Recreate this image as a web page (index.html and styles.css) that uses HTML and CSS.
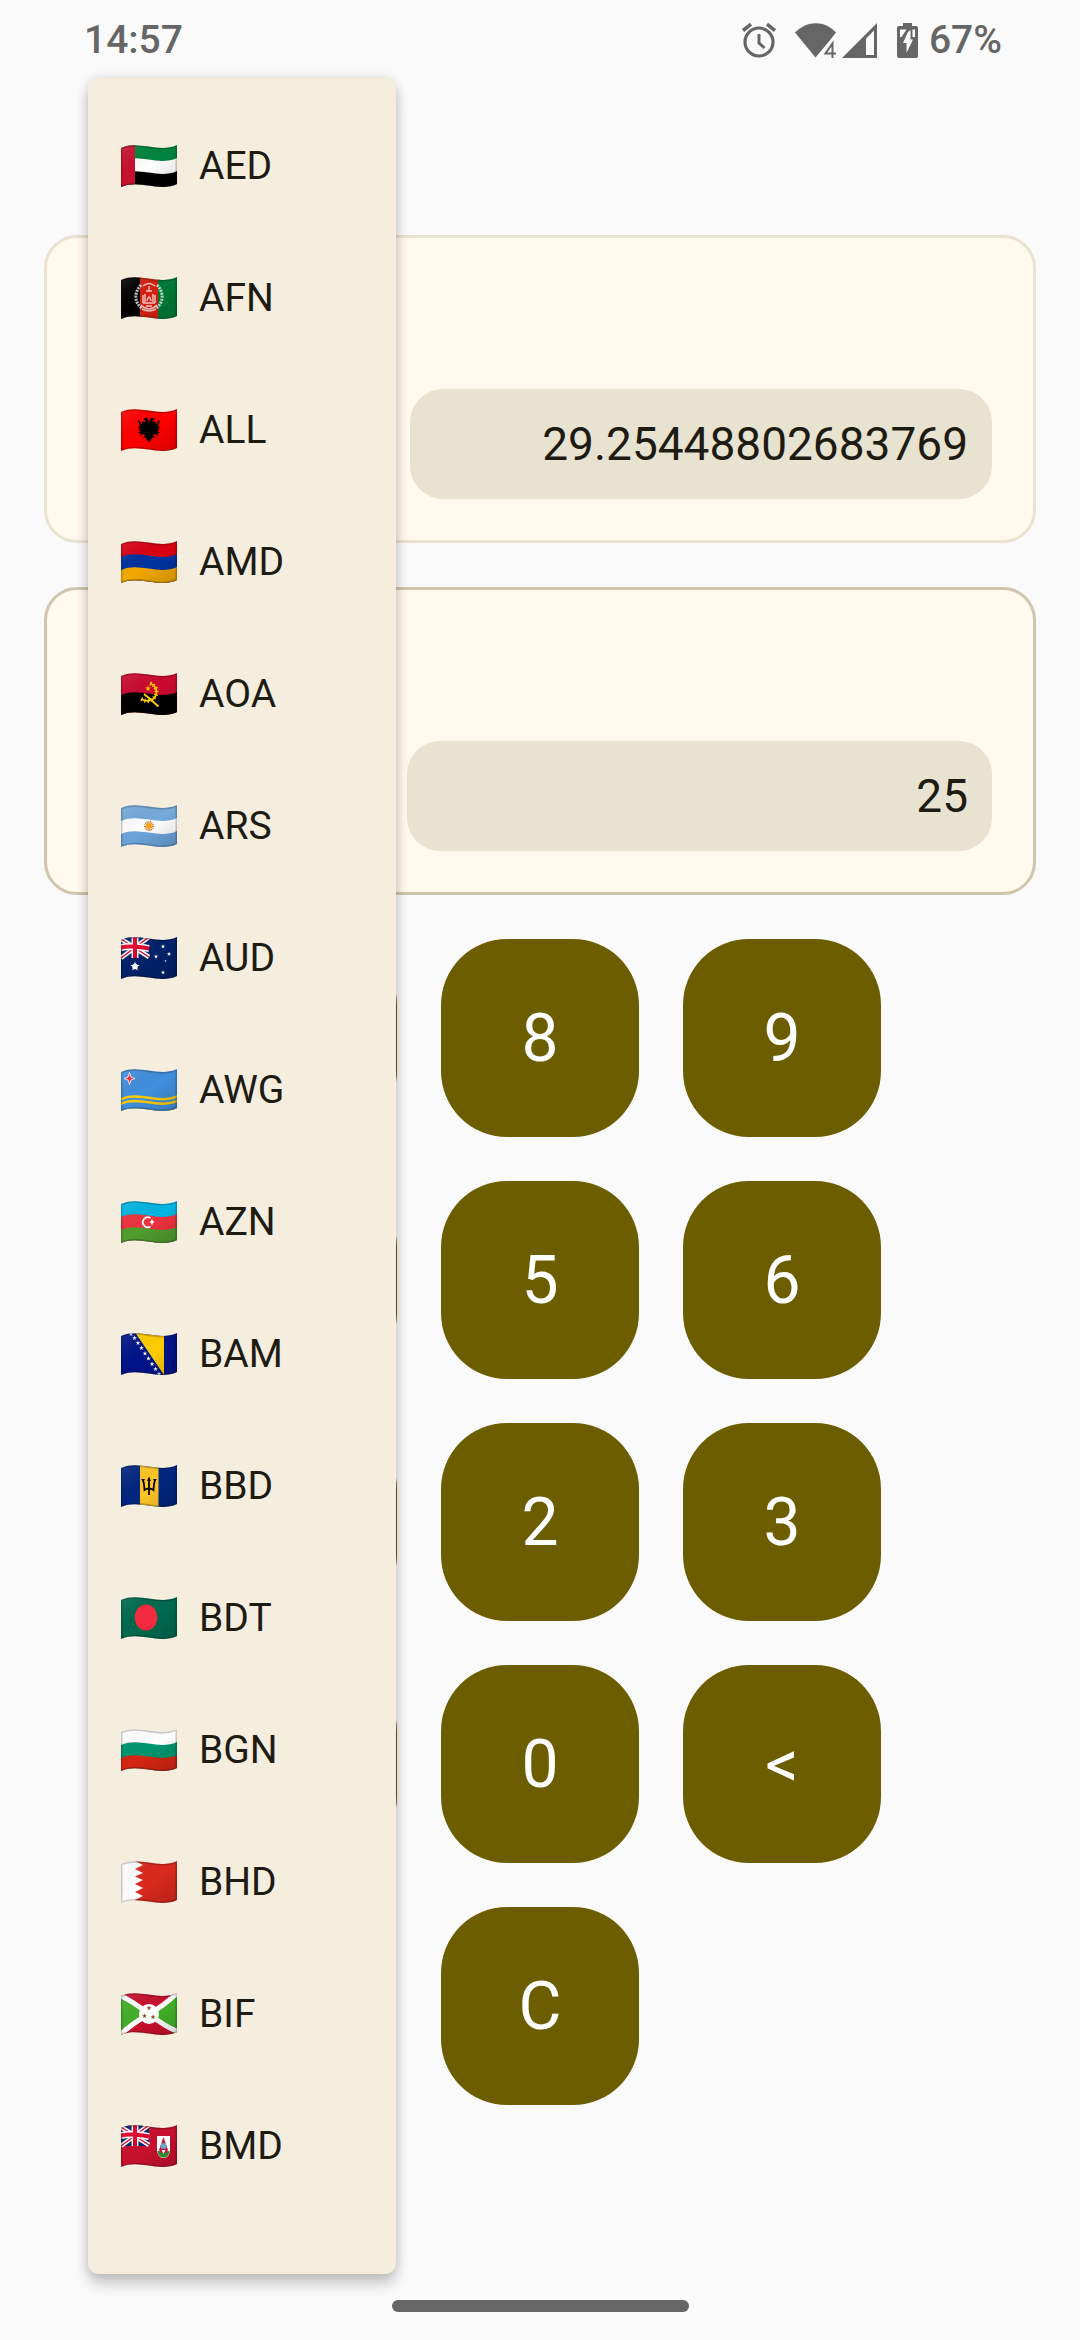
FILE: index.html
```html
<!DOCTYPE html>
<html lang="en">
<head>
<meta charset="utf-8">
<meta name="viewport" content="width=device-width, initial-scale=1">
<title>Currency converter</title>
<link rel="stylesheet" href="styles.css">
</head>
<body>
<svg class="sprite" width="0" height="0" aria-hidden="true">
  <defs>
    <clipPath id="cloth"><path d="M0 3C18-5 38 8.500 56 0V39C38 47.500 18 34 0 42Z"/></clipPath>
    <linearGradient id="light" x1="0" y1="0" x2="1" y2="1">
      <stop offset="0" stop-color="#fff" stop-opacity=".12"/>
      <stop offset=".5" stop-color="#000" stop-opacity="0"/>
      <stop offset="1" stop-color="#000" stop-opacity=".16"/>
    </linearGradient>
    <path id="band" d="M0 3C18-5 38 8.500 56 0V60H0Z"/>
    <g id="shade">
      <path d="M0 0H56V42H0Z" fill="url(#light)"/>
      <path d="M0 3C18-5 38 8.500 56 0V39C38 47.500 18 34 0 42Z" fill="none" stroke="#000" stroke-opacity=".2" stroke-width="3"/>
    </g>
    <path id="star" d="M0-5L1.200-1.600 4.800-1.500 1.900.6 2.900 4 0 2-2.900 4-1.900.6-4.800-1.500-1.200-1.600Z"/>
    <g id="jack">
      <path d="M0 0H28V21H0Z" fill="#012169"/>
      <path d="M0 2L28 20M28 0L0 21" stroke="#fff" stroke-width="4.500"/>
      <path d="M0 2L28 20M28 0L0 21" stroke="#e4002b" stroke-width="1.400"/>
      <path d="M14 0V21M0 10.500C10 8 18 10 28 11.500" stroke="#fff" stroke-width="7" fill="none"/>
      <path d="M14 0V21M0 10.500C10 8 18 10 28 11.500" stroke="#e4002b" stroke-width="4" fill="none"/>
    </g>
  </defs>
</svg>

<header class="status">
  <span class="clock">14:57</span>
  <div class="status-icons">
    <svg class="alarm" viewBox="0 0 34 35" aria-hidden="true" fill="none" stroke="#666">
      <circle cx="17" cy="19" r="14" stroke-width="3.200"/>
      <path d="M1 7.500L9 1.200M33 7.500L25 1.200" stroke-width="3.600"/>
      <path d="M17 11V20L22.500 25" stroke-width="3"/>
    </svg>
    <svg class="wifi" viewBox="0 0 42 35" aria-hidden="true">
      <path d="M0 9.500C12-3 30-3 41 9.500L33.500 19 20.500 34.500Z" fill="#666"/>
      <path d="M36 18.500L27.500 29V35H42V18.500Z" fill="#fafafa"/>
      <path d="M37.500 35V20.500L30.500 30.500H41" fill="none" stroke="#666" stroke-width="2"/>
    </svg>
    <svg class="signal" viewBox="0 0 35 35" aria-hidden="true">
      <path d="M0 35L35 0V35ZM24 32H32V7.500L24 15.500Z" fill="#666" fill-rule="evenodd"/>
    </svg>
    <svg class="battery" viewBox="0 0 21 36" aria-hidden="true">
      <path d="M6 4V1H15V4H19Q21 4 21 6V34Q21 36 19 36H2Q0 36 0 34V6Q0 4 2 4Z" fill="#666"/>
      <path d="M3 7.500H9.500L4.500 15H3ZM15.500 7.500H18V15H15.500ZM13.500 8V17.500H16L9.500 31V21H6L11 10Z" fill="#fafafa"/>
    </svg>
    <span class="charge">67%</span>
  </div>
</header>

<main class="converter">
  <section class="card" aria-label="Converted amount">
    <button class="picker" type="button" aria-label="Choose target currency"></button>
    <input class="amount" type="text" value="29.25448802683769" aria-label="Converted amount" readonly>
  </section>
  <section class="card card-active" aria-label="Amount to convert">
    <button class="picker picker-narrow" type="button" aria-label="Choose source currency"></button>
    <input class="amount" type="text" value="25" aria-label="Amount to convert" readonly>
  </section>

  <div class="keypad">
    <button class="key" type="button">7</button>
    <button class="key" type="button">8</button>
    <button class="key" type="button">9</button>
    <button class="key" type="button">4</button>
    <button class="key" type="button">5</button>
    <button class="key" type="button">6</button>
    <button class="key" type="button">1</button>
    <button class="key" type="button">2</button>
    <button class="key" type="button">3</button>
    <button class="key" type="button">.</button>
    <button class="key" type="button">0</button>
    <button class="key" type="button">&lt;</button>
    <button class="key key-clear" type="button">C</button>
  </div>
</main>

<ul class="menu">
  <li><button class="option" type="button">
    <svg class="flag" viewBox="0 0 56 42" aria-hidden="true"><g clip-path="url(#cloth)">
      <path d="M0 0H56V42H0Z" fill="#00843d"/><use href="#band" y="13" fill="#fff"/><use href="#band" y="26" fill="#000"/>
      <path d="M0 0H14V42H0Z" fill="#c8102e"/><use href="#shade"/></g></svg>
    AED</button></li>
  <li><button class="option" type="button">
    <svg class="flag" viewBox="0 0 56 42" aria-hidden="true"><g clip-path="url(#cloth)">
      <path d="M0 0H20V42H0Z" fill="#000"/><path d="M19 0H38V42H19Z" fill="#d32011"/><path d="M37 0H56V42H37Z" fill="#007a36"/>
      <g fill="none" stroke="#fff" stroke-opacity=".75">
        <path d="M20 8C13 15 13 26 21 31M36 8C43 15 43 26 35 31" stroke-width="3" stroke-dasharray="2 1"/>
        <path d="M22 9Q28 4 34 9M20 28Q28 36 36 28M21 32Q28 36 35 32" stroke-width="1.500"/>
        <path d="M22 26V18M34 26V18M25 14H31M24 17V25M32 17V25M22 26H34M26 24Q28 16 30 24M28 9V14M25 29H31" stroke-width="1.400"/>
      </g><use href="#shade"/></g></svg>
    AFN</button></li>
  <li><button class="option" type="button">
    <svg class="flag" viewBox="0 0 56 42" aria-hidden="true"><g clip-path="url(#cloth)">
      <path d="M0 0H56V42H0Z" fill="#f00"/><use href="#shade"/>
      <path d="M28 14L27 10 25 8.500 22 10 24.500 11.500 24 13 21 12.500 21 16 18 11 17 12 19 17 17 17 19 20 17 20.500 20 22 17 24 20 24.500 18 27 23 25 24 27 21 29 25 28.500 26 31 28 33 30 31 31 28.500 35 29 32 27 33 25 38 27 36 24.500 39 24 36 22 39 20.500 37 20 39 17 37 17 39 12 38 11 35 16 35 12.500 32 13 31.500 11.500 34 10 31 8.500 29 10Z" fill="#000"/>
      </g></svg>
    ALL</button></li>
  <li><button class="option" type="button">
    <svg class="flag" viewBox="0 0 56 42" aria-hidden="true"><g clip-path="url(#cloth)">
      <path d="M0 0H56V42H0Z" fill="#d90012"/><use href="#band" y="13" fill="#0033a0"/><use href="#band" y="26" fill="#f2a800"/><use href="#shade"/></g></svg>
    AMD</button></li>
  <li><button class="option" type="button">
    <svg class="flag" viewBox="0 0 56 42" aria-hidden="true"><g clip-path="url(#cloth)">
      <path d="M0 0H56V42H0Z" fill="#cc092f"/><use href="#band" y="19" fill="#000"/><use href="#shade"/>
      <g fill="none" stroke="#ffcb00"><path d="M29 10.500C37 13 37 22 32 26C28 29 24 28 20 26" stroke-width="1.800"/>
      <path d="M29 10.500C37 13 37 22 32 26C28 29 24 28 20 26" stroke-width="4" stroke-dasharray="1.200 2.200"/>
      <path d="M23 21Q28 25 37.500 33.500" stroke-width="2"/></g>
      <use href="#star" transform="translate(27 15.500) scale(.6)" fill="#ffcb00"/></g></svg>
    AOA</button></li>
  <li><button class="option" type="button">
    <svg class="flag" viewBox="0 0 56 42" aria-hidden="true"><g clip-path="url(#cloth)">
      <path d="M0 0H56V42H0Z" fill="#75aadb"/><use href="#band" y="13" fill="#fff"/><use href="#band" y="26" fill="#6ba3da"/><use href="#shade"/>
      <circle cx="28" cy="21" r="4" fill="none" stroke="#b5803e" stroke-width="2" stroke-dasharray="1 .6"/><circle cx="28" cy="21" r="3" fill="#f9a215"/></g></svg>
    ARS</button></li>
  <li><button class="option" type="button">
    <svg class="flag" viewBox="0 0 56 42" aria-hidden="true"><g clip-path="url(#cloth)">
      <path d="M0 0H56V42H0Z" fill="#012169"/><use href="#jack"/>
      <g fill="#fff"><use href="#star" transform="translate(14 29.500)"/><circle cx="14" cy="29.500" r="2.800"/>
      <use href="#star" transform="translate(42 9.500) scale(.45)"/><use href="#star" transform="translate(48 17) scale(.45)"/><use href="#star" transform="translate(35 19.500) scale(.45)"/><use href="#star" transform="translate(44.500 24) scale(.25)"/><use href="#star" transform="translate(42 35.500) scale(.45)"/></g>
      <use href="#shade"/></g></svg>
    AUD</button></li>
  <li><button class="option" type="button">
    <svg class="flag" viewBox="0 0 56 42" aria-hidden="true"><g clip-path="url(#cloth)">
      <path d="M0 0H56V42H0Z" fill="#418fde"/>
      <use href="#band" y="26" fill="#ffcd00"/><use href="#band" y="28.500" fill="#418fde"/><use href="#band" y="30.500" fill="#ffcd00"/><use href="#band" y="33" fill="#418fde"/>
      <path d="M8.500 3.500L10 8 14 9.500 10 11 8.500 15.500 7 11 3 9.500 7 8Z" fill="#ef3340" stroke="#fff" stroke-width=".8"/><use href="#shade"/></g></svg>
    AWG</button></li>
  <li><button class="option" type="button">
    <svg class="flag" viewBox="0 0 56 42" aria-hidden="true"><g clip-path="url(#cloth)">
      <path d="M0 0H56V42H0Z" fill="#00b5e2"/><use href="#band" y="13" fill="#ef3340"/><use href="#band" y="26" fill="#509e2f"/><use href="#shade"/>
      <path d="M29.500 17A5 5 0 1 0 29.500 25.500" fill="none" stroke="#fff" stroke-width="1.800"/>
      <path d="M31 18L32 20 33.500 21 32 22 31 24.500 30 22 28.500 21 30 20Z" fill="#fff"/></g></svg>
    AZN</button></li>
  <li><button class="option" type="button">
    <svg class="flag" viewBox="0 0 56 42" aria-hidden="true"><g clip-path="url(#cloth)">
      <path d="M0 0H56V42H0Z" fill="#001489"/><path d="M14.500 0H43V42Z" fill="#ffcd00"/>
      <g fill="#fff"><use href="#star" transform="translate(10 1) scale(.5)"/><use href="#star" transform="translate(13.500 5) scale(.5)"/><use href="#star" transform="translate(17 10) scale(.5)"/><use href="#star" transform="translate(20.500 15) scale(.5)"/><use href="#star" transform="translate(24 20.500) scale(.5)"/><use href="#star" transform="translate(27.500 25.500) scale(.5)"/><use href="#star" transform="translate(31 31) scale(.5)"/><use href="#star" transform="translate(34.500 36) scale(.5)"/><use href="#star" transform="translate(38 41) scale(.5)"/></g>
      <use href="#shade"/></g></svg>
    BAM</button></li>
  <li><button class="option" type="button">
    <svg class="flag" viewBox="0 0 56 42" aria-hidden="true"><g clip-path="url(#cloth)">
      <path d="M0 0H56V42H0Z" fill="#00267f"/><path d="M19 0H37.500V42H19Z" fill="#ffc726"/><use href="#shade"/>
      <path d="M28 30V14M21.500 15Q23 16 23.500 25Q28 22 32.500 25Q33 16 34.500 15" fill="none" stroke="#000" stroke-width="1.800"/><path d="M28 11.500L30 16H26ZM20 14H24L22.500 17ZM36 14H32L33.500 17Z"/></g></svg>
    BBD</button></li>
  <li><button class="option" type="button">
    <svg class="flag" viewBox="0 0 56 42" aria-hidden="true"><g clip-path="url(#cloth)">
      <path d="M0 0H56V42H0Z" fill="#006a4e"/><use href="#shade"/><ellipse cx="25" cy="20.500" rx="11.300" ry="13" fill="#f42a41"/></g></svg>
    BDT</button></li>
  <li><button class="option" type="button">
    <svg class="flag" viewBox="0 0 56 42" aria-hidden="true"><g clip-path="url(#cloth)">
      <path d="M0 0H56V42H0Z" fill="#fff"/><use href="#band" y="13" fill="#00966e"/><use href="#band" y="26" fill="#d62612"/><use href="#shade"/></g></svg>
    BGN</button></li>
  <li><button class="option" type="button">
    <svg class="flag" viewBox="0 0 56 42" aria-hidden="true"><g clip-path="url(#cloth)">
      <path d="M0 0H56V42H0Z" fill="#fff"/><path d="M56 0H14L22 4 14 8 22 12 14 15.500 22 19 14 23 22 27 14 31 22 35 14 39V42H56Z" fill="#da291c"/><use href="#shade"/></g></svg>
    BHD</button></li>
  <li><button class="option" type="button">
    <svg class="flag" viewBox="0 0 56 42" aria-hidden="true"><g clip-path="url(#cloth)">
      <path d="M0 0H56V42H0Z" fill="#c8102e"/><path d="M0 0L28 21 0 42ZM56 0L28 21 56 42Z" fill="#43b02a"/>
      <path d="M0 3Q10 7 28 21T56 38M56 0Q44 12 28 21T0 41" fill="none" stroke="#fff" stroke-width="5"/><use href="#shade"/><circle cx="28" cy="21" r="10" fill="#fff"/>
      <g fill="#c8102e" stroke="#43b02a" stroke-width=".8"><use href="#star" transform="translate(28 15) scale(.45)"/><use href="#star" transform="translate(23.500 23) scale(.45)"/><use href="#star" transform="translate(32 24) scale(.45)"/></g></g></svg>
    BIF</button></li>
  <li><button class="option" type="button">
    <svg class="flag" viewBox="0 0 56 42" aria-hidden="true"><g clip-path="url(#cloth)">
      <path d="M0 0H56V42H0Z" fill="#c8102e"/><use href="#jack"/><use href="#shade"/>
      <path d="M36 11H49V24C49 30 46 33 42.500 33S36 30 36 24Z" fill="#fff"/><path d="M36.500 26H48.500C48 30 46 32.500 42.500 32.500S37 30 36.500 26Z" fill="#2c8a2c"/>
      <path d="M42.500 12L44.500 18 47 25 45 28H40L38 25 40.500 18Z" fill="#c8102e"/><circle cx="42.500" cy="21" r="3" fill="#6aa5c9"/><path d="M40.500 25H44.500L42.500 29Z" fill="#fff"/></g></svg>
    BMD</button></li>
</ul>

<footer class="gesture-bar"><div class="handle"></div></footer>
</body>
</html>
```
FILE: styles.css
```css
* {
  box-sizing: border-box;
}

body {
  position: relative;
  display: flex;
  flex-direction: column;
  min-height: 100vh;
  margin: 0;
  background: #fafafa;
  color: #1e1b13;
  font-family: Roboto, "Noto Sans", sans-serif;
}

button,
input {
  margin: 0;
  padding: 0;
  border: 0;
  color: inherit;
  font: inherit;
}

.sprite {
  display: block;
}

/* System status bar */
.status {
  display: flex;
  align-items: center;
  justify-content: space-between;
  height: 80px;
  padding: 0 78px 0 84px;
  color: #666;
  font-size: 39px;
  font-weight: 500;
  line-height: 44px;
}

.status-icons {
  display: flex;
  align-items: center;
}

.status-icons svg {
  display: block;
  height: 35px;
}

.alarm {
  width: 34px;
  margin-right: 19px;
}

.wifi {
  width: 42px;
  margin-right: 5px;
}

.signal {
  width: 35px;
  margin-right: 20px;
}

.status-icons .battery {
  width: 21px;
  height: 36px;
  margin-right: 11px;
}

/* Amount cards */
.converter {
  display: flex;
  flex-direction: column;
  gap: 44px;
  padding: 155px 44px 44px;
}

.card {
  display: flex;
  align-items: flex-end;
  gap: 22px;
  height: 308px;
  padding: 41px;
  border: 3px solid #ebe3d1;
  border-radius: 33px;
  background: #fff9ee;
}

.card-active {
  border-color: #cfc6ad;
}

.picker {
  flex: 0 0 300px;
  height: 110px;
  background: transparent;
}

.picker-narrow {
  flex-basis: 297px;
}

.amount {
  flex: 1;
  min-width: 0;
  height: 110px;
  padding: 0 24px;
  border-radius: 33px;
  background: #e8e2d1;
  font-size: 46px;
  text-align: right;
}

/* Keypad */
.keypad {
  display: grid;
  grid-template-columns: repeat(3, 198px);
  gap: 44px;
  justify-content: center;
}

.key {
  height: 198px;
  border-radius: 66px;
  background: #6c5d00;
  color: #fff;
  font-size: 66px;
}

.key-clear {
  grid-column: 2;
}

/* Currency menu, open above the first picker */
.menu {
  position: absolute;
  top: 78px;
  left: 88px;
  width: 308px;
  margin: 0;
  padding: 22px 0 62px;
  border-radius: 11px;
  background: #f5eedf;
  box-shadow: 0 10px 14px rgba(0, 0, 0, 0.2), 0 0 12px rgba(0, 0, 0, 0.12);
  list-style: none;
}

.option {
  display: flex;
  align-items: center;
  gap: 22px;
  width: 100%;
  height: 132px;
  padding: 0 33px;
  background: transparent;
  font-size: 39px;
}

.flag {
  display: block;
  width: 56px;
  height: 42px;
}

/* Gesture navigation handle */
.gesture-bar {
  display: flex;
  justify-content: center;
  margin-top: auto;
  padding-bottom: 28px;
}

.handle {
  width: 297px;
  height: 12px;
  border-radius: 6px;
  background: #666;
}
```
